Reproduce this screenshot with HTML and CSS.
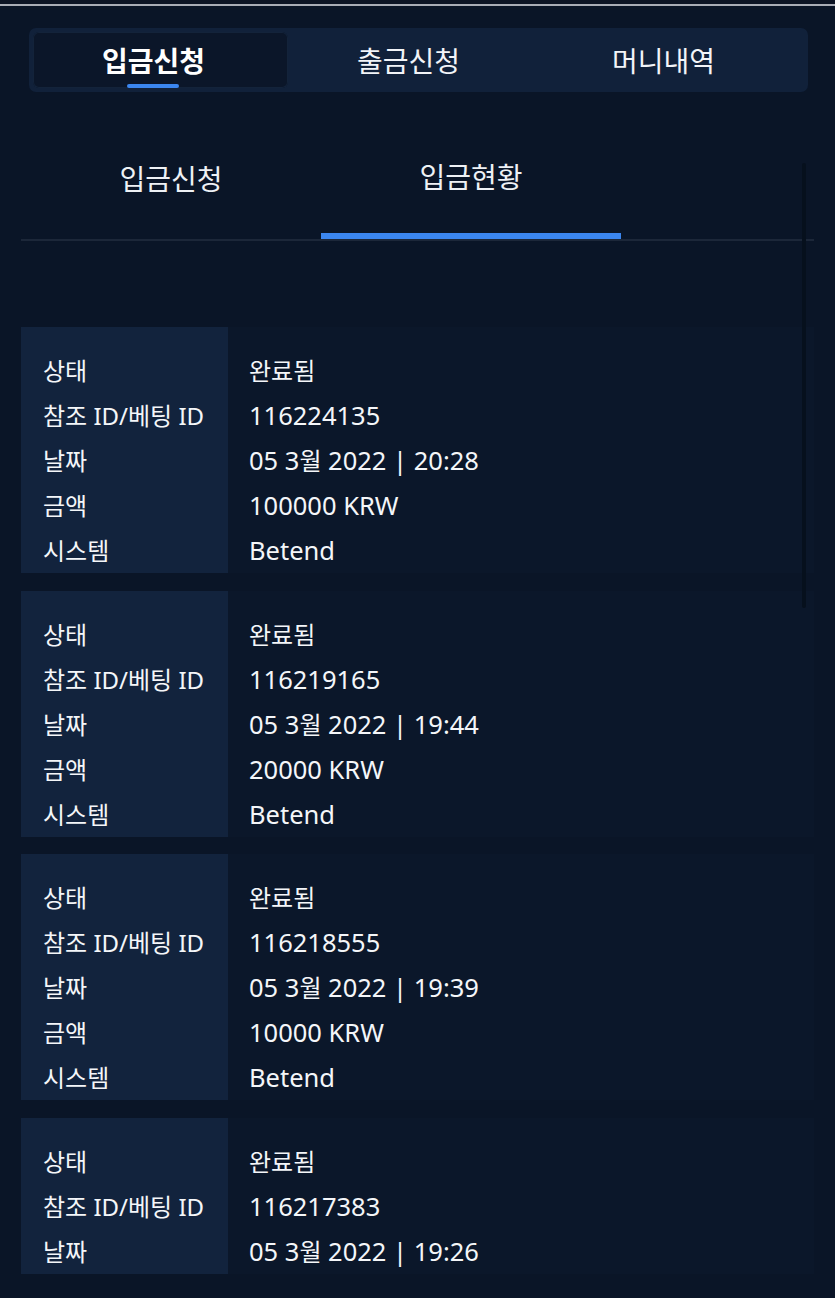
FILE: index.html
```html
<!DOCTYPE html>
<html lang="ko">
<head>
<meta charset="utf-8">
<link rel="stylesheet" href="styles.css">
</head>
<body>
<div class="topline"></div>
<div class="page">
  <nav class="main-tabs">
    <div class="main-tab active"><span class="tab-text">입금신청</span><span class="ind"></span></div>
    <div class="main-tab"><span class="tab-text">출금신청</span></div>
    <div class="main-tab"><span class="tab-text">머니내역</span></div>
  </nav>
  <div class="sub-wrap">
    <div class="sub-tabs">
      <div class="sub-tab">입금신청</div>
      <div class="sub-tab active">입금현황</div>
    </div>
    <div class="scrollbar"></div>
    <div class="list">
      <div class="card">
        <div class="labels"><div class="row">상태</div><div class="row">참조 ID/베팅 ID</div><div class="row">날짜</div><div class="row">금액</div><div class="row">시스템</div></div>
        <div class="values"><div class="row"><span class="ko">완료됨</span></div><div class="row">116224135</div><div class="row">05 3<span class="ko">월</span> 2022 | 20:28</div><div class="row">100000 KRW</div><div class="row">Betend</div></div>
      </div>
      <div class="card">
        <div class="labels"><div class="row">상태</div><div class="row">참조 ID/베팅 ID</div><div class="row">날짜</div><div class="row">금액</div><div class="row">시스템</div></div>
        <div class="values"><div class="row"><span class="ko">완료됨</span></div><div class="row">116219165</div><div class="row">05 3<span class="ko">월</span> 2022 | 19:44</div><div class="row">20000 KRW</div><div class="row">Betend</div></div>
      </div>
      <div class="card">
        <div class="labels"><div class="row">상태</div><div class="row">참조 ID/베팅 ID</div><div class="row">날짜</div><div class="row">금액</div><div class="row">시스템</div></div>
        <div class="values"><div class="row"><span class="ko">완료됨</span></div><div class="row">116218555</div><div class="row">05 3<span class="ko">월</span> 2022 | 19:39</div><div class="row">10000 KRW</div><div class="row">Betend</div></div>
      </div>
      <div class="card">
        <div class="labels"><div class="row">상태</div><div class="row">참조 ID/베팅 ID</div><div class="row">날짜</div></div>
        <div class="values"><div class="row"><span class="ko">완료됨</span></div><div class="row">116217383</div><div class="row">05 3<span class="ko">월</span> 2022 | 19:26</div></div>
      </div>
    </div>
  </div>
</div>
</body>
</html>
```
FILE: styles.css
```css
html, body {
  margin: 0;
  padding: 0;
  background: #0a1527;
  color: #ffffff;
  font-family: "Noto Sans", "Noto Sans CJK KR", sans-serif;
  height: 1298px;
  overflow: hidden;
}
.topline {
  height: 4px;
  background: #0c1424;
  border-bottom: 2px solid #a9adb6;
}
.page {
  padding: 22px 21px 0 21px;
}
.main-tabs {
  margin: 0 6px 0 8px;
  height: 64px;
  box-sizing: border-box;
  padding: 4px;
  border-radius: 7px;
  background: #11213a;
  display: grid;
  grid-template-columns: 255px 255px 255px;
}
.main-tab {
  position: relative;
  display: flex;
  align-items: center;
  justify-content: center;
  padding-right: 14px;
  font-size: 28px;
  color: #f2f4f8;
}
.main-tab.active {
  background: #0b1629;
  border-radius: 6px;
  font-weight: 700;
  color: #fff;
  box-shadow: inset 0 0 0 1px #13233a;
}
.main-tab .ind {
  position: absolute;
  left: 94px;
  bottom: 0;
  width: 52px;
  height: 4px;
  border-radius: 2px;
  background: #3b86ef;
}
.sub-wrap {
  position: relative;
}
.sub-tabs {
  margin-top: 27px;
  display: flex;
  border-bottom: 2px solid #1c2739;
}
.sub-tab {
  width: 300px;
  height: 120px;
  box-sizing: border-box;
  display: flex;
  align-items: center;
  justify-content: center;
  padding-bottom: 2px;
  font-size: 28px;
  color: #eef1f5;
}
.sub-tab.active {
  border-bottom: 6px solid #3b86ef;
  padding-bottom: 0;
}
.scrollbar {
  position: absolute;
  left: 781px;
  top: 44px;
  width: 4px;
  height: 445px;
  background: #06101d;
  border-radius: 2px;
}
.list {
  margin-top: 86px;
  display: flex;
  flex-direction: column;
  gap: 17.5px;
}
.card {
  display: flex;
  background: #0b172a;
}
.labels {
  width: 207px;
  box-sizing: border-box;
  padding: 21px 0 0 22px;
  background: #12233d;
  white-space: nowrap;
  color: #f4f6f9;
  font-size: 24px;
}
.values {
  padding: 21px 0 0 21px;
  color: #f4f6f9;
  font-size: 25.5px;
}
.values .ko {
  font-size: 24px;
}
.row {
  height: 45px;
  line-height: 45px;
}
```
